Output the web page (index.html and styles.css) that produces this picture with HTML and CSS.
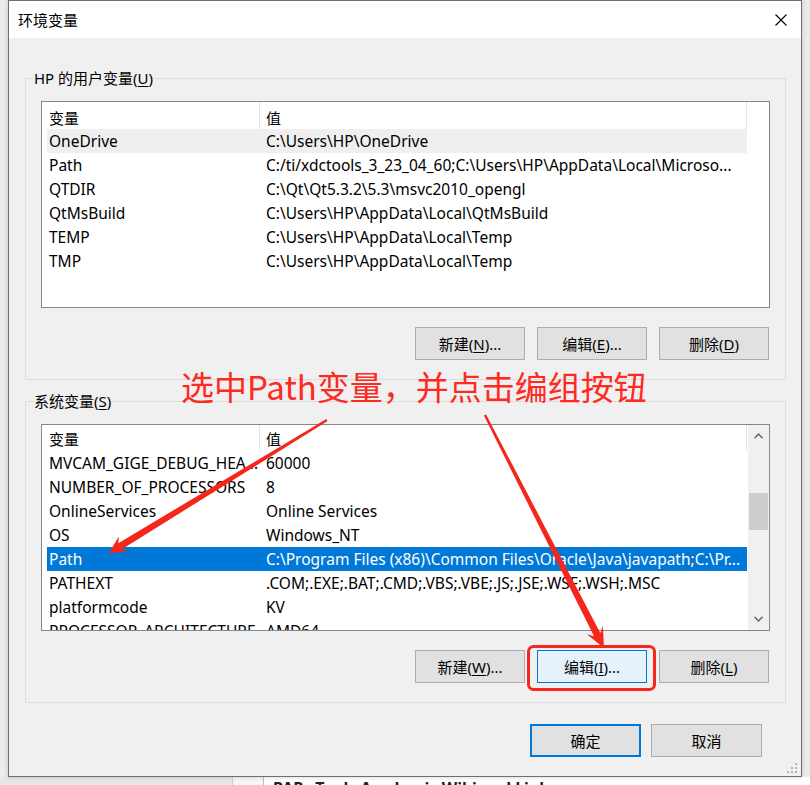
FILE: index.html
```html
<!DOCTYPE html>
<html lang="zh-CN">
<head>
<meta charset="utf-8">
<title>环境变量</title>
<link rel="stylesheet" href="styles.css">
</head>
<body>
<div class="dialog">
  <div class="titlebar">
    <span class="title">环境变量</span>
    <svg class="close" width="12" height="12" viewBox="0 0 12 12"><path d="M0.5 0.5 L11.5 11.5 M11.5 0.5 L0.5 11.5" stroke="#000" stroke-width="1.1" fill="none"/></svg>
  </div>
  <div class="content">
    <div class="group">
      <div class="group-label">HP 的用户变量(<u>U</u>)</div>
      <div class="listbox">
        <div class="table">
          <div class="thead"><div class="th c1">变量</div><div class="th c2">值</div></div>
          <div class="tr soft"><div class="td c1">OneDrive</div><div class="td c2">C:\Users\HP\OneDrive</div></div>
          <div class="tr"><div class="td c1">Path</div><div class="td c2">C:/ti/xdctools_3_23_04_60;C:\Users\HP\AppData\Local\Microso...</div></div>
          <div class="tr"><div class="td c1">QTDIR</div><div class="td c2">C:\Qt\Qt5.3.2\5.3\msvc2010_opengl</div></div>
          <div class="tr"><div class="td c1">QtMsBuild</div><div class="td c2">C:\Users\HP\AppData\Local\QtMsBuild</div></div>
          <div class="tr"><div class="td c1">TEMP</div><div class="td c2">C:\Users\HP\AppData\Local\Temp</div></div>
          <div class="tr"><div class="td c1">TMP</div><div class="td c2">C:\Users\HP\AppData\Local\Temp</div></div>
        </div>
      </div>
      <div class="btnrow">
        <div class="btn">新建(<u>N</u>)...</div>
        <div class="btn">编辑(<u>E</u>)...</div>
        <div class="btn">删除(<u>D</u>)</div>
      </div>
    </div>

    <div class="group group2">
      <div class="group-label">系统变量(<u>S</u>)</div>
      <div class="listbox">
        <div class="table">
          <div class="thead thead-short"><div class="th c1">变量</div><div class="th c2">值</div></div>
          <div class="tr"><div class="td c1">MVCAM_GIGE_DEBUG_HEA...</div><div class="td c2">60000</div></div>
          <div class="tr"><div class="td c1">NUMBER_OF_PROCESSORS</div><div class="td c2">8</div></div>
          <div class="tr"><div class="td c1">OnlineServices</div><div class="td c2">Online Services</div></div>
          <div class="tr"><div class="td c1">OS</div><div class="td c2">Windows_NT</div></div>
          <div class="tr sel"><div class="td c1">Path</div><div class="td c2">C:\Program Files (x86)\Common Files\Oracle\Java\javapath;C:\Pr...</div></div>
          <div class="tr"><div class="td c1">PATHEXT</div><div class="td c2">.COM;.EXE;.BAT;.CMD;.VBS;.VBE;.JS;.JSE;.WSF;.WSH;.MSC</div></div>
          <div class="tr"><div class="td c1">platformcode</div><div class="td c2">KV</div></div>
          <div class="tr"><div class="td c1">PROCESSOR_ARCHITECTURE</div><div class="td c2">AMD64</div></div>
        </div>
        <div class="vscroll">
          <div class="sbtn"><svg width="9" height="6" viewBox="0 0 9 6"><path d="M0.5 5.2 L4.5 1 L8.5 5.2" stroke="#606060" stroke-width="1.4" fill="none"/></svg></div>
          <div class="thumb"></div>
          <div class="sbtn sdown"><svg width="9" height="6" viewBox="0 0 9 6"><path d="M0.5 0.8 L4.5 5 L8.5 0.8" stroke="#606060" stroke-width="1.4" fill="none"/></svg></div>
        </div>
      </div>
      <div class="btnrow">
        <div class="btn">新建(<u>W</u>)...</div>
        <div class="btn hot">编辑(<u>I</u>)...</div>
        <div class="btn">删除(<u>L</u>)</div>
      </div>
    </div>

    <div class="footer">
      <div class="btn wide default">确定</div>
      <div class="btn wide">取消</div>
    </div>
  </div>
  <svg class="grip" width="11" height="11" viewBox="0 0 11 11">
    <rect x="8" y="0" width="2" height="2" fill="#b4b4b4"/>
    <rect x="4" y="4" width="2" height="2" fill="#b4b4b4"/>
    <rect x="8" y="4" width="2" height="2" fill="#b4b4b4"/>
    <rect x="0" y="8" width="2" height="2" fill="#b4b4b4"/>
    <rect x="4" y="8" width="2" height="2" fill="#b4b4b4"/>
    <rect x="8" y="8" width="2" height="2" fill="#b4b4b4"/>
  </svg>
</div>
<div class="behind">
  <div class="behind-left"></div>
  <div class="behind-mid"></div>
  <div class="behind-right">PAPs Tools Academic Wiki and Links</div>
</div>

<svg class="marks" width="810" height="785" viewBox="0 0 810 785">
  <polygon fill="#f5261b" points="327.6,421.1 121.9,549.2 128.2,551.8 109,553 118.8,536.4 118.3,543.2 326.4,418.9"/>
  <polygon fill="#f5261b" points="483.9,415.6 594.1,636.2 586.9,634.3 604,648 602.9,626.1 600.3,633.0 486.1,414.4"/>
  <rect x="528.5" y="646.5" width="126" height="43" rx="5" ry="5" fill="none" stroke="#f5261b" stroke-width="3"/>
</svg>
<div class="annot">选中Path变量，并点击编组按钮</div>
</body>
</html>
```

FILE: styles.css
```css
html, body {
  margin: 0;
  padding: 0;
}
body {
  width: 810px;
  height: 785px;
  overflow: hidden;
  position: relative;
  background: #ececec;
  font-family: "Noto Sans", "Noto Sans CJK SC", sans-serif;
  font-size: 15px;
  color: #000;
}
u {
  text-decoration: underline;
  text-underline-offset: 2px;
}

.dialog {
  margin-left: 8px;
  width: 794px;
  box-sizing: border-box;
  border: 1px solid #6f6f6f;
  background: #f0f0f0;
  position: relative;
  box-shadow: 0 0 5px rgba(0, 0, 0, 0.18);
}
.titlebar {
  height: 37px;
  background: #fff;
  display: flex;
  align-items: center;
  justify-content: space-between;
  padding: 0 14px 0 9px;
}
.title {
  line-height: 20px;
}
.close {
  display: block;
}

.content {
  padding: 40px 15px 19px 16px;
}
.group {
  border: 1px solid #dcdcdc;
  padding: 0 15px 19px 15px;
}
.group2 {
  margin-top: 21px;
}
.group-label {
  width: fit-content;
  margin: -11px 0 0 -8px;
  padding: 0 1px;
  height: 20px;
  line-height: 20px;
  background: #f0f0f0;
}
.listbox {
  margin-top: 13px;
  height: 207px;
  box-sizing: border-box;
  border: 1px solid #828790;
  background: #fff;
  display: flex;
  overflow: hidden;
}
.table {
  flex: none;
  width: 700px;
  margin-left: 5px;
}
.thead {
  display: flex;
  height: 27px;
}
.thead-short {
  height: 26px;
}
.th {
  box-sizing: border-box;
  border-right: 1px solid #e5e5e5;
  display: flex;
  align-items: center;
  padding-top: 3px;
}
.thead-short .th {
  padding-top: 1px;
}
.tr {
  display: flex;
  height: 24px;
  align-items: center;
}
.td {
  box-sizing: border-box;
  white-space: nowrap;
  overflow: hidden;
  line-height: 24px;
  font-size: 15.5px;
}
.c1 {
  width: 213px;
  padding-left: 2px;
}
.c2 {
  width: 487px;
  padding-left: 6px;
}
.tr.soft {
  background: #efefef;
}
.tr.sel {
  background: #0078d7;
  color: #fff;
}

.vscroll {
  margin-left: auto;
  width: 21px;
  background: #f0f0f0;
  display: flex;
  flex-direction: column;
  align-items: center;
}
.sbtn {
  height: 22px;
  width: 21px;
  display: flex;
  align-items: center;
  justify-content: center;
}
.sbtn svg {
  display: block;
}
.sdown {
  margin-top: auto;
}
.thumb {
  margin-top: 46px;
  width: 19px;
  height: 37px;
  background: #cdcdcd;
}

.btnrow {
  display: flex;
  justify-content: flex-end;
  gap: 12px;
  margin-top: 19px;
  margin-right: 1px;
}
.btn {
  width: 110px;
  height: 33px;
  box-sizing: border-box;
  border: 1px solid #adadad;
  background: #e1e1e1;
  display: flex;
  align-items: center;
  justify-content: center;
  white-space: nowrap;
}
.btn.hot {
  background: #e5f1fb;
  border-color: #0078d7;
}
.footer {
  display: flex;
  justify-content: flex-end;
  gap: 10px;
  margin-top: 21px;
  margin-right: 24px;
}
.btn.wide {
  width: 111px;
}
.btn.default {
  border: 2px solid #0078d7;
}

.grip {
  position: absolute;
  right: 3px;
  bottom: 2px;
}

.behind {
  display: flex;
  height: 8px;
  overflow: hidden;
}
.behind-left {
  width: 232px;
  background: #e6e6e6;
  border-right: 1px solid #cfcfcf;
}
.behind-mid {
  width: 30px;
  background: #f7f7f7;
  border-right: 1px solid #bdbdbd;
}
.behind-right {
  flex: 1;
  background: #fff;
  padding: 1px 0 0 9px;
  font-size: 16px;
  font-weight: bold;
  line-height: 20px;
  white-space: nowrap;
  color: #222;
}

.marks {
  position: absolute;
  left: 0;
  top: 0;
  pointer-events: none;
}
.annot {
  position: absolute;
  left: 181px;
  top: 370px;
  font-family: "Noto Sans CJK SC", sans-serif;
  font-size: 33px;
  line-height: 33px;
  color: #fe2a22;
  white-space: nowrap;
}
```
